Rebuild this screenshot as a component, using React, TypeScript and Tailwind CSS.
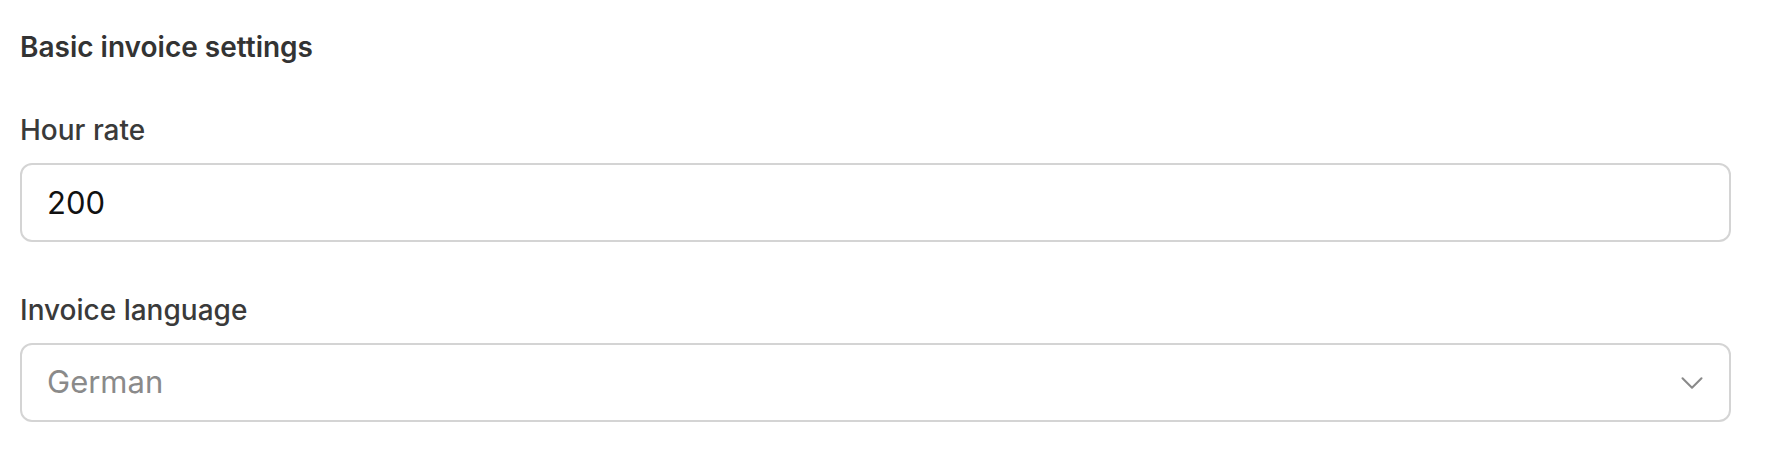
import { ChevronDown } from 'lucide-react'

export default function App() {
  return (
    <div
      className="min-h-[458px] bg-white pl-[20px] pr-[53px] pt-[30px]"
      style={{ fontFamily: 'Inter, "Noto Sans", sans-serif' }}
    >
      <h2 className="text-[28px] font-semibold leading-[34px] text-[#333333]">Basic invoice settings</h2>

      <div className="mt-[49px]">
        <label className="block text-[28px] font-medium leading-[34px] text-[#3a3a3a]">Hour rate</label>
        <input
          defaultValue="200"
          className="mt-[16px] box-border h-[79px] w-full rounded-[12px] border-2 border-[#d4d4d4] bg-white px-[25px] text-[31px] text-[#111111] outline-none"
        />
      </div>

      <div className="mt-[51px]">
        <label className="block text-[28px] font-medium leading-[34px] text-[#3a3a3a]">Invoice language</label>
        <div className="relative mt-[16px]">
          <select
            defaultValue="de"
            className="box-border h-[79px] w-full appearance-none rounded-[12px] border-2 border-[#d4d4d4] bg-white px-[25px] text-[31px] text-[#8a8a8a] outline-none"
          >
            <option value="de">German</option>
            <option value="en">English</option>
          </select>
          <ChevronDown
            className="pointer-events-none absolute right-[20px] top-1/2 h-[38px] w-[38px] -translate-y-1/2 text-[#8a8a8a]"
            strokeWidth={1.3}
          />
        </div>
      </div>
    </div>
  )
}
